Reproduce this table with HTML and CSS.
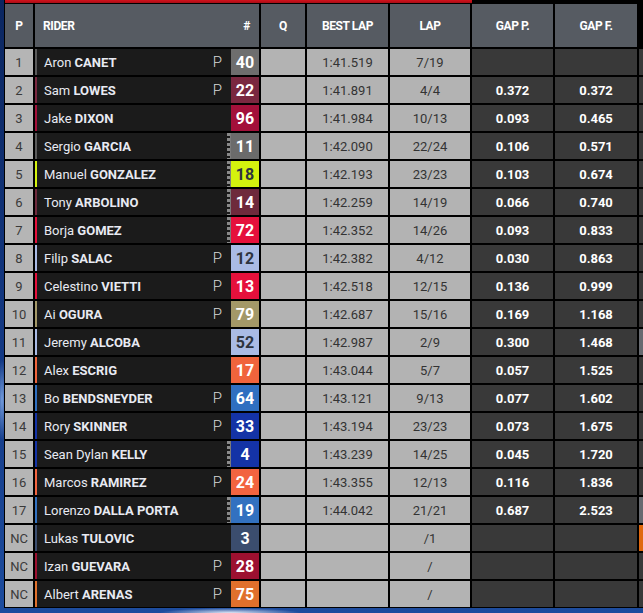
FILE: index.html
```html
<!DOCTYPE html>
<html>
<head>
<meta charset="utf-8">
<link rel="stylesheet" href="styles.css">
</head>
<body>
<div class="panel">
  <div class="tabbar"></div>
  <div class="table">
    <div class="row head">
      <div class="h">P</div>
      <div class="h rider-h"><span>RIDER</span><span class="hash">#</span></div>
      <div class="h">Q</div>
      <div class="h">BEST LAP</div>
      <div class="h">LAP</div>
      <div class="h">GAP P.</div>
      <div class="h">GAP F.</div>
      <div class="h extra-h"><div class="eh-top"></div><div class="eh-bot"></div></div>
    </div>

    <div class="row" style="--team:#6e6e6e;--bar:#5a5a5a"><div class="pos">1</div><div class="rider"><span class="name">Aron <b>CANET</b></span><span class="pm">P</span><span class="num">40</span></div><div class="q"></div><div class="lt">1:41.519</div><div class="lt">7/19</div><div class="gap"></div><div class="gap"></div><div class="ex"></div></div>
    <div class="row" style="--team:#7a2840"><div class="pos">2</div><div class="rider"><span class="name">Sam <b>LOWES</b></span><span class="pm">P</span><span class="num">22</span></div><div class="q"></div><div class="lt">1:41.891</div><div class="lt">4/4</div><div class="gap">0.372</div><div class="gap">0.372</div><div class="ex"></div></div>
    <div class="row" style="--team:#a3103a"><div class="pos">3</div><div class="rider"><span class="name">Jake <b>DIXON</b></span><span class="num">96</span></div><div class="q"></div><div class="lt">1:41.984</div><div class="lt">10/13</div><div class="gap">0.093</div><div class="gap">0.465</div><div class="ex"></div></div>
    <div class="row" style="--team:#6b6b6b;--bar:#5a5a5a"><div class="pos">4</div><div class="rider"><span class="name">Sergio <b>GARCIA</b></span><span class="chk"></span><span class="num">11</span></div><div class="q"></div><div class="lt">1:42.090</div><div class="lt">22/24</div><div class="gap">0.106</div><div class="gap">0.571</div><div class="ex"></div></div>
    <div class="row dark-num" style="--team:#d4f20e"><div class="pos">5</div><div class="rider"><span class="name">Manuel <b>GONZALEZ</b></span><span class="chk"></span><span class="num">18</span></div><div class="q"></div><div class="lt">1:42.193</div><div class="lt">23/23</div><div class="gap">0.103</div><div class="gap">0.674</div><div class="ex"></div></div>
    <div class="row" style="--team:#6e2a3c"><div class="pos">6</div><div class="rider"><span class="name">Tony <b>ARBOLINO</b></span><span class="chk"></span><span class="num">14</span></div><div class="q"></div><div class="lt">1:42.259</div><div class="lt">14/19</div><div class="gap">0.066</div><div class="gap">0.740</div><div class="ex"></div></div>
    <div class="row" style="--team:#e5103c"><div class="pos">7</div><div class="rider"><span class="name">Borja <b>GOMEZ</b></span><span class="chk"></span><span class="num">72</span></div><div class="q"></div><div class="lt">1:42.352</div><div class="lt">14/26</div><div class="gap">0.093</div><div class="gap">0.833</div><div class="ex"></div></div>
    <div class="row dark-num" style="--team:#aabbe5"><div class="pos">8</div><div class="rider"><span class="name">Filip <b>SALAC</b></span><span class="pm">P</span><span class="num">12</span></div><div class="q"></div><div class="lt">1:42.382</div><div class="lt">4/12</div><div class="gap">0.030</div><div class="gap">0.863</div><div class="ex"></div></div>
    <div class="row" style="--team:#e5103c"><div class="pos">9</div><div class="rider"><span class="name">Celestino <b>VIETTI</b></span><span class="pm">P</span><span class="num">13</span></div><div class="q"></div><div class="lt">1:42.518</div><div class="lt">12/15</div><div class="gap">0.136</div><div class="gap">0.999</div><div class="ex"></div></div>
    <div class="row" style="--team:#a39868"><div class="pos">10</div><div class="rider"><span class="name">Ai <b>OGURA</b></span><span class="pm">P</span><span class="num">79</span></div><div class="q"></div><div class="lt">1:42.687</div><div class="lt">15/16</div><div class="gap">0.169</div><div class="gap">1.168</div><div class="ex"></div></div>
    <div class="row dark-num" style="--team:#aabbe5"><div class="pos">11</div><div class="rider"><span class="name">Jeremy <b>ALCOBA</b></span><span class="num">52</span></div><div class="q"></div><div class="lt">1:42.987</div><div class="lt">2/9</div><div class="gap">0.300</div><div class="gap">1.468</div><div class="ex ex-grey"></div></div>
    <div class="row" style="--team:#f0643c"><div class="pos">12</div><div class="rider"><span class="name">Alex <b>ESCRIG</b></span><span class="num">17</span></div><div class="q"></div><div class="lt">1:43.044</div><div class="lt">5/7</div><div class="gap">0.057</div><div class="gap">1.525</div><div class="ex"></div></div>
    <div class="row" style="--team:#2f6fc0"><div class="pos">13</div><div class="rider"><span class="name">Bo <b>BENDSNEYDER</b></span><span class="pm">P</span><span class="num">64</span></div><div class="q"></div><div class="lt">1:43.121</div><div class="lt">9/13</div><div class="gap">0.077</div><div class="gap">1.602</div><div class="ex"></div></div>
    <div class="row" style="--team:#1433a6"><div class="pos">14</div><div class="rider"><span class="name">Rory <b>SKINNER</b></span><span class="pm">P</span><span class="num">33</span></div><div class="q"></div><div class="lt">1:43.194</div><div class="lt">23/23</div><div class="gap">0.073</div><div class="gap">1.675</div><div class="ex"></div></div>
    <div class="row" style="--team:#1433a6"><div class="pos">15</div><div class="rider"><span class="name">Sean Dylan <b>KELLY</b></span><span class="chk"></span><span class="num">4</span></div><div class="q"></div><div class="lt">1:43.239</div><div class="lt">14/25</div><div class="gap">0.045</div><div class="gap">1.720</div><div class="ex"></div></div>
    <div class="row" style="--team:#f26440"><div class="pos">16</div><div class="rider"><span class="name">Marcos <b>RAMIREZ</b></span><span class="pm">P</span><span class="num">24</span></div><div class="q"></div><div class="lt">1:43.355</div><div class="lt">12/13</div><div class="gap">0.116</div><div class="gap">1.836</div><div class="ex"></div></div>
    <div class="row" style="--team:#3271c0"><div class="pos">17</div><div class="rider"><span class="name">Lorenzo <b>DALLA PORTA</b></span><span class="chk"></span><span class="num">19</span></div><div class="q"></div><div class="lt">1:44.042</div><div class="lt">21/21</div><div class="gap">0.687</div><div class="gap">2.523</div><div class="ex ex-grey"></div></div>
    <div class="row" style="--team:#3b4d6e"><div class="pos">NC</div><div class="rider"><span class="name">Lukas <b>TULOVIC</b></span><span class="num">3</span></div><div class="q"></div><div class="lt"></div><div class="lt">/1</div><div class="gap"></div><div class="gap"></div><div class="ex ex-orange"></div></div>
    <div class="row" style="--team:#9c1030"><div class="pos">NC</div><div class="rider"><span class="name">Izan <b>GUEVARA</b></span><span class="pm">P</span><span class="num">28</span></div><div class="q"></div><div class="lt"></div><div class="lt">/</div><div class="gap"></div><div class="gap"></div><div class="ex"></div></div>
    <div class="row" style="--team:#e0702c"><div class="pos">NC</div><div class="rider"><span class="name">Albert <b>ARENAS</b></span><span class="pm">P</span><span class="num">75</span></div><div class="q"></div><div class="lt"></div><div class="lt">/</div><div class="gap"></div><div class="gap"></div><div class="ex"></div></div>
  </div>
</div>
</body>
</html>
```

FILE: styles.css
```css
html, body {
  margin: 0;
  padding: 0;
}
body {
  width: 643px;
  height: 613px;
  overflow: hidden;
  font-family: Roboto, "Liberation Sans", Arial, sans-serif;
  background:
    radial-gradient(ellipse 70px 5px at 230px 613px, rgba(235,240,250,0.95), rgba(120,160,220,0) 100%),
    radial-gradient(ellipse 6px 40px at 2px 400px, rgba(140,180,240,0.8), rgba(20,60,150,0) 100%),
    linear-gradient(180deg, #0b2660 0%, #143a86 60%, #1d4c9e 100%);
}
.panel {
  margin-left: 4px;
  width: 639px;
  box-sizing: border-box;
  background: #000;
  padding: 0 0 1px 1px;
}
.tabbar {
  width: 467px;
  height: 3px;
  background: linear-gradient(180deg, #d3121c, #a80d16);
  margin-bottom: 1px;
}
.table {
  display: flex;
  flex-direction: column;
  gap: 2px;
}
.row {
  display: grid;
  grid-template-columns: 28px 224px 44px 81px 80px 81px 82px 1fr;
  column-gap: 2px;
  height: 26px;
}
.row.head {
  height: 43px;
}
.h {
  background: #565b62;
  color: #fff;
  font-weight: 700;
  font-size: 12px;
  letter-spacing: -0.4px;
  display: flex;
  align-items: center;
  justify-content: center;
}
.rider-h {
  justify-content: space-between;
  padding: 0 9px 0 8px;
}
.extra-h {
  background: #000;
  display: flex;
  flex-direction: column;
  gap: 1px;
}
.eh-top {
  background: #5c6167;
  height: 26px;
}
.eh-bot {
  background: #3d4044;
  flex: 1;
}
.pos {
  background: #b5b5b5;
  color: #3a3a3a;
  font-size: 13px;
  display: flex;
  align-items: center;
  justify-content: center;
}
.rider {
  background: #1b1b1b;
  border-left: 2px solid var(--bar, var(--team));
  display: flex;
  align-items: stretch;
}
.name {
  flex: 1;
  color: #e8eaf2;
  font-size: 13px;
  display: flex;
  align-items: center;
  padding-left: 7px;
  white-space: pre;
}
.name b {
  font-weight: 700;
}
.pm {
  color: #d8d8d8;
  font-size: 15px;
  font-weight: 300;
  display: flex;
  align-items: center;
  padding-right: 9px;
}
.chk {
  width: 4px;
  background:
    linear-gradient(90deg, transparent 3px, #7a7a7a 3px),
    repeating-linear-gradient(180deg, #8a8a8a 0 3px, #1b1b1b 3px 5px);
}
.num {
  width: 28px;
  background: var(--team);
  color: #fff;
  font-weight: 700;
  font-size: 16px;
  display: flex;
  align-items: center;
  justify-content: center;
}
.dark-num .num {
  color: #2e3440;
}
.q {
  background: #b3b3b3;
}
.lt {
  background: #b3b3b3;
  color: #333;
  font-size: 13px;
  display: flex;
  align-items: center;
  justify-content: center;
}
.gap {
  background: #393939;
  color: #fff;
  font-weight: 700;
  font-size: 13px;
  display: flex;
  align-items: center;
  justify-content: center;
}
.ex {
  background: #393939;
}
.ex-grey {
  background: #676a70;
}
.ex-orange {
  background: #e0680e;
}
```
